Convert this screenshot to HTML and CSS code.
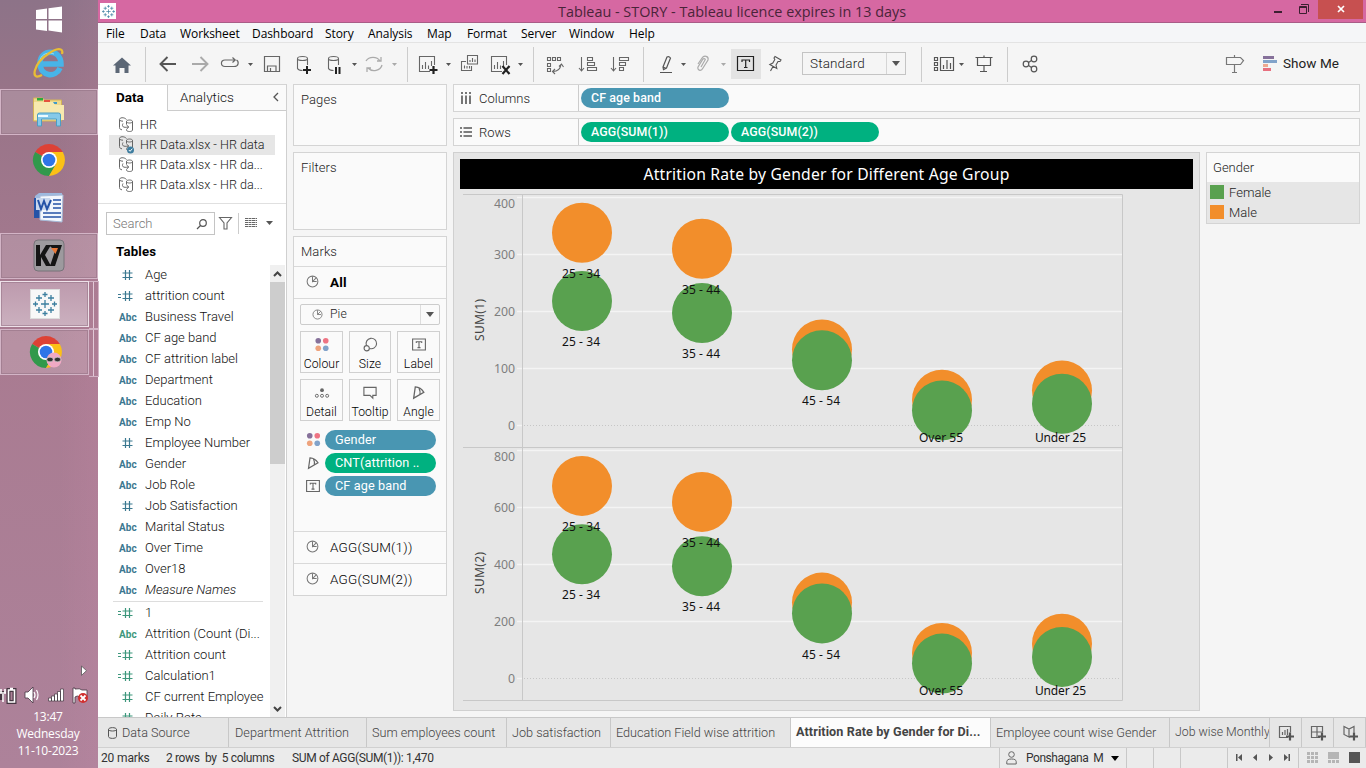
FILE: index.html
```
<!DOCTYPE html>
<html lang="en">
<head>
<meta charset="utf-8">
<title>Tableau - STORY</title>
<link rel="stylesheet" href="styles.css">
</head>
<body>
<svg class="sprites" aria-hidden="true">
  <symbol id="ds" viewBox="0 0 16 16"><g fill="none" stroke="#666"><path d="M8.500 2.500C6-.2 1.500.5 1.500 2.500v8c0 1.500 1 2 2.500 2.300M1.500 2.800c.5 1 2 1.400 3.500 1.400M8.500 4.500c0-2 6-2 6 0v8.500c0 2-6 2-6 0v-.5M8.500 4.500c0 2 6 2 6 0M8.500 4.500v3M5 6.500c-1.500 3 0 4.500 5.500 3.500M8.500 8l2.300 2-2.300 2.200"/></g></symbol>
  <symbol id="hash" viewBox="0 0 18 14"><path fill="none" stroke="currentColor" stroke-width="1.2" d="M7.500 2v10M11.500 2v10M4.500 5h10M4.500 9.500h10"/></symbol>
  <symbol id="ehash" viewBox="0 0 18 14"><path fill="none" stroke="currentColor" stroke-width="1.2" d="M7.500 2v10M11.500 2v10M4.500 5h10M4.500 9.500h10M0 5.500h3M0 8.500h3"/></symbol>
  <symbol id="pie" viewBox="0 0 14 14"><g fill="none" stroke="#777" stroke-width="1.1"><circle cx="7" cy="7" r="5.800"/><path d="M7 1.500V7l4-4M7 7h4.500"/></g></symbol>
  <symbol id="dots" viewBox="0 0 16 16"><circle cx="4" cy="4" r="3" fill="#86719a"/><circle cx="12" cy="4" r="3" fill="#ee7483"/><circle cx="4" cy="12" r="3" fill="#eea37d"/><circle cx="12" cy="12" r="3" fill="#82a3ca"/></symbol>
  <symbol id="label" viewBox="0 0 14 14"><path fill="none" stroke="#666" stroke-width="1.100" d="M.6 1.500h12.800v11H.6zM4.300 5.500V4.300h5.400v1.200M7 4.300v5.800M5.500 10.100h3"/></symbol>
  <symbol id="angle" viewBox="0 0 14 14"><path fill="none" stroke="#666" stroke-width="1.200" d="M2.500 12.300 4 1.800Q9 2 12 6.800ZM7.500 3q1.500 3 .8 6"/></symbol>
  <symbol id="chrome" viewBox="0 0 34 34"><path fill="#dd4135" d="M17 17 3.200 9a16 16 0 0 1 27.600 0Z"/><path fill="#31994b" d="M17 17 3.100 9A16 16 0 0 0 17 33l6-10Z"/><path fill="#fbc116" d="M17 9h13.800A16 16 0 0 1 17 33l7-12Z"/><circle cx="17" cy="17" r="8" fill="#fff"/><circle cx="17" cy="17" r="6.300" fill="#2f75e8"/></symbol>
  <symbol id="tableau" viewBox="0 0 24 24"><path fill="none" stroke="#3c7f9f" stroke-width="1.300" d="M12 8v8M8 12h8M6 3v6M3 6h6M18 3v6M15 6h6M6 15v6M3 18h6M18 15v6M15 18h6M12 0v5M9.500 2.500h5M12 19v5M9.500 21.500h5M2.500 9.500v5M0 12h5M21.500 9.500v5M19 12h5"/></symbol>
</svg>
<div class="desktop">
<aside class="taskbar">
  <svg class="start" width="98" height="88" viewBox="0 0 98 88">
    <path fill="#fff" d="M36 10 47 8.500V19H36zM48.500 8.300 62 6.500V19H48.500zM36 20.500h11V31l-11-1.500zM48.500 20.500H62v12l-13.500-2z"/>
    <path fill="none" stroke="#48b4e8" stroke-width="5.500" d="M40 64h21c0-16-21-15-21-1 0 14 16 15 20 5"/>
    <path fill="none" stroke="#8fdcfa" stroke-width="1" d="M40 60c2-7 9-8 14-6"/>
    <path fill="none" stroke="#e8bd35" stroke-width="2.200" d="M42 75c-13 7-8-12 6-21 8-6 16-7 14 0"/>
  </svg>
  <div class="task t-files"><svg width="34" height="34" viewBox="32 96 34 34"><path fill="#efd98a" stroke="#d4b456" d="M33.500 99h9l2 2h17v21h-28z"/><path fill="#2dab3d" d="M37 99h6v2.500h-6z"/><path fill="#e5533d" d="M44 101h6v2h-6z"/><path fill="#3f9bc9" d="M51 103h6v2h-6z"/><path fill="#f7e9ae" d="M34 103h19l2 3h9v15H34z"/><path fill="#86c9e9" stroke="#4b9ec4" d="M37.500 127v-11q0-2 2-2h19q2 0 2 2v11h-4v-7h-15v7z"/><path stroke="#e9faff" stroke-width="2" d="M38 117h10"/></svg></div>
  <div class="slot"><svg width="34" height="34"><use href="#chrome"/></svg></div>
  <div class="slot slot-word"><svg width="34" height="34" viewBox="32 190 34 34"><path fill="#9db9df" d="m35 196 4-3h23v5H35z"/><path fill="#2453a7" d="M34 198h15v20H34z"/><path fill="#f2f7fd" stroke="#a6bad8" d="m40 196 23-1-1 27-22-2z"/><path stroke="#2453a7" stroke-width="1.500" d="M53 200h8M53 204h8M53 208h8M43 213h18M43 217h18"/><path fill="#c9d8ee" d="M36 198h14v12H36z"/><path fill="none" stroke="#2453a7" stroke-width="2" d="m38 200 3 9 3-8 3 8 4-9"/></svg></div>
  <div class="task t-k7"><svg width="34" height="34"><rect x="2" y="1" width="30" height="31" rx="4" fill="#9d9a9e" stroke="#777379"/><path fill="#151515" d="M4 6h4v10l6-10h5l-6 10 6 11h-5l-5-9v9H4zM17 6h13l-7 21h-5l5-15-3-3z"/><path fill="#e8793a" d="m19 9 7 0-2.500 6z"/></svg></div>
  <div class="task t-tableau stacked active"><div class="tile"><svg width="26" height="26" viewBox="-1 -1 26 26"><use href="#tableau" width="24" height="24"/></svg></div></div>
  <div class="task t-chrome stacked"><svg width="34" height="34"><use href="#chrome"/><circle cx="25" cy="25" r="7.500" fill="#f0a9c4"/><g fill="#333" stroke="#ddd" stroke-width=".6"><ellipse cx="21" cy="24.500" rx="3.200" ry="2.300"/><ellipse cx="28.500" cy="24.500" rx="3.200" ry="2.300"/></g></svg></div>
  <svg class="tray" width="98" height="50" viewBox="0 660 98 50">
    <path fill="#fff" stroke="#555" stroke-width=".8" d="m81.500 666 5 4.700-5 4.700z"/>
    <path fill="none" stroke="#443641" stroke-width="4" d="M8.500 690h6v12h-6zM2 691v9"/>
    <path fill="none" stroke="#fff" stroke-width="1.600" d="M8.500 690h6v12h-6zM10 688.500h3M1 689v4M5 689v4M0 693h6M3 694v8"/>
    <path fill="#fff" stroke="#443641" stroke-width=".8" d="M25 692h3l5-5v16l-5-5h-3z"/>
    <path fill="none" stroke="#fff" stroke-width="1.200" d="M34 692q2 3 0 6M36.500 690q3 5 0 10"/>
    <path fill="#fff" stroke="#443641" stroke-width=".7" d="M48.500 698h3v3h-3zM51.500 696h3v5h-3zM54.500 694h3v7h-3zM57.500 691.500h3v9.500h-3zM60.500 689h3v12h-3z"/>
    <path fill="#fff" stroke="#443641" stroke-width=".8" d="M73 688h2v1q5-1 7 1h5v7h-7q-3-2-5 0v6h-2z"/>
    <circle cx="83" cy="698" r="5" fill="#d12f2f"/><path stroke="#fff" stroke-width="1.800" d="m80.500 695.500 5 5m0-5-5 5"/>
  </svg>
  <div class="clock"><span>13:47</span><span>Wednesday</span><span>11-10-2023</span></div>
</aside>

<main class="app">
  <header class="titlebar">
    <div class="app-icon"><svg width="13" height="13"><use href="#tableau"/></svg></div>
    <h1>Tableau - STORY - Tableau licence expires in 13 days</h1>
    <svg class="winbtns" width="100" height="23" viewBox="1266 0 100 23"><path stroke="#3c1f30" stroke-width="2" d="M1274 12h8"/><path fill="none" stroke="#3c1f30" d="M1299.500 6.500h7v7h-7zM1299.500 7.500h7M1301 4.500h7.500v7.500"/><path fill="#c75050" d="M1318 0h45v19h-45z"/><path stroke="#fff" stroke-width="1.700" d="m1338 6 6 6m0-6-6 6"/></svg>
  </header>
  <nav class="menu"><span class="m1">File</span><span class="m2">Data</span><span class="m3">Worksheet</span><span class="m4">Dashboard</span><span class="m5">Story</span><span class="m6">Analysis</span><span class="m7">Map</span><span class="m8">Format</span><span class="m9">Server</span><span class="m10">Window</span><span>Help</span></nav>
  <div class="toolbar">
    <svg width="48" height="41" viewBox="98 43 48 41"><path fill="#5c6776" d="m113 65.500 9-8 9 8h-2.500V73h-4v-5h-5v5h-4v-7.500z"/><path stroke="#ccc" d="M145.500 47v35"/></svg>
    <svg width="274" height="41" viewBox="146 43 274 41">
      <g fill="none" stroke="#555" stroke-width="1.900"><path d="M161 64h15M167.500 57l-7 7 7 7"/><path stroke="#aaa" d="M192 64h15M200.500 57l7 7-7 7"/></g>
      <g fill="none" stroke="#666" stroke-width="1.200"><path d="M225 60c-5 0-4.500 6.500 0 6.500h9c5 0 5-5 2.500-6.500M225 60h10M232.500 57.500l2.700 2.500-2.700 2.500"/><path d="M264.500 56.500h15v15h-15zM267.500 71v-5h8.500v5M270.500 71v-3"/></g>
      <g fill="none" stroke="#666" stroke-width="1.100"><path d="M297.500 59v9.500q1 2 5 2M307.500 59v6"/><ellipse cx="302.500" cy="58.500" rx="5" ry="2"/><path d="M328.500 59v9.500q1 2 5 2M338.500 59v6"/><ellipse cx="333.500" cy="58.500" rx="5" ry="2"/></g>
      <path stroke="#222" stroke-width="2" d="M303 70h8M307 66v8M336 67v7M339.500 67v7"/>
      <path fill="none" stroke="#aaa" stroke-width="1.300" d="M366 61a8 7 0 0 1 14 0M382 65a8 7 0 0 1-14 3M377 61h4v-4M371 68h-4v4"/>
      <path fill="#555" d="M248 63h5l-2.500 3zM352 63h5l-2.500 3z"/><path fill="#aaa" d="M392 63h5l-2.500 3z"/><path stroke="#ccc" d="M407.500 47v35"/>
    </svg>
    <svg width="234" height="41" viewBox="412 43 234 41">
      <g fill="none" stroke="#666" stroke-width="1.100"><path d="M430 71.500h-10.500v-15h15V65M422.500 69v-4M425.500 69v-7M428.500 69v-3.500M431.500 66v-5"/><path d="M467.500 55.500h10v8.500h-10zM466 61.500h-4.500v9h10V66M464.500 68.500v-3M467 68.500v-2.500M469.500 68.500V66M470 62v-2M472.500 62v-4M475 62v-2.500M502 71.500h-10.500v-15h15V65M494.500 69v-4M497.500 69v-7M500.500 69v-3.500M503.500 66v-5"/>
      <path d="M547.500 57.500h3v3h-3zM552.500 57.500h3v3h-3zM557.500 57.500h3v3h-3zM547.500 63.500h3v3h-3zM547.500 68.500h3v3h-3zM553 71.500q7 0 8-7M555 69l-2.500 2.500 2.500 2.500M559 66.500l2.500-2.500 2 3"/>
      <path d="M581.500 57v13M579 68l2.500 3 2.500-3M587.500 57.500h5v3h-5zM587.500 62.500h7v3h-7zM587.500 67.500h9v3h-9zM613.500 57v13M611 68l2.500 3 2.500-3M619.500 57.500h9v3h-9zM619.500 62.500h6v3h-6zM619.500 67.500h4v3h-4z"/></g>
      <path stroke="#222" stroke-width="2.200" d="M429.500 70h8M433.500 66v8M502.500 66l7 8m0-8-7 8"/>
      <path fill="#555" d="M446 63h5l-2.500 3zM518 63h5l-2.500 3z"/><path stroke="#ccc" d="M533.500 47v35M643.500 47v35"/>
    </svg>
    <svg width="156" height="41" viewBox="646 43 156 41">
      <path fill="#e3e3e3" d="M731 49h30v30h-30z"/>
      <path fill="none" stroke="#555" stroke-width="1.200" d="m663 67 4-10q2-1 3.500 1l-4 10-3 1.500zM660 72.500h12M663 67l3.500 1.500"/>
      <path fill="none" stroke="#aaa" stroke-width="1.200" d="m698 64 4-6c2-3 7-2 6 2l-5 8c-2 4-6 2-5-1l5-8c1-1 3 0 2 1l-4 7"/>
      <path fill="none" stroke="#222" stroke-width="1.200" d="M737.500 56.500h16v14h-16zM742 62v-2h7.500v2M745.700 60v7.500M744 67.500h3.500"/>
      <path fill="none" stroke="#555" stroke-width="1.100" d="m775 56.500 6 3.500-1 1.500h-2l-2 3.500.8 3.500-7-4 3-1.500 2-3.500-.8-1.500zM773 66.500l-2.500 4.500"/>
      <path fill="#555" d="M681 63h5l-2.500 3z"/><path fill="#aaa" d="M721 63h5l-2.500 3z"/>
    </svg>
    <div class="standard"><span>Standard</span><i class="caret"></i></div>
    <svg width="314" height="41" viewBox="906 43 314 41">
      <g fill="none" stroke="#555" stroke-width="1.200"><path d="M934.500 57.500h3v3h-3zM934.500 62.500h3v3h-3zM934.500 67.500h3v3h-3zM940.500 57.500h13v13h-13zM943.500 69v-4M947 69v-9M950.500 69v-6M975.500 57.500h17M977.500 57.500v8h13v-8M984 55.500v2M984 65.500v6M980 71.500h7"/><circle cx="1026" cy="64" r="2.800"/><circle cx="1034" cy="59" r="2.800"/><circle cx="1034" cy="69" r="2.800"/><path d="m1028.500 62.500 3-2M1028.500 65.500l3 2"/></g>
      <path fill="#555" d="M959 63h5l-2.500 3z"/><path stroke="#ccc" d="M921.500 47v35M1007.500 47v35"/>
    </svg>
    <svg width="63" height="41" viewBox="1220 43 63 41"><path fill="none" stroke="#777" stroke-width="1.200" d="M1226.500 57.500h14l3 3-3 4h-14zM1234.500 55v2.500M1234.500 64.500v8M1232 72.500h5"/><path fill="#86719a" d="M1263 56h11v3h-11z"/><path fill="#82a3ca" d="M1263 60h14v3h-14z"/><path fill="#eea990" d="M1263 64h5v3h-5z"/><path fill="#e8707f" d="M1263 68h8v3h-8z"/></svg>
    <span class="showme">Show Me</span>
  </div>

  <div class="work">
    <section class="datapane">
      <div class="tabs"><b>Data</b><div class="analytics"><span>Analytics</span><svg width="8" height="10" viewBox="0 0 8 10"><path fill="none" stroke="#555" stroke-width="1.300" d="M6 1 2 5l4 4"/></svg></div></div>
      <ul class="sources">
        <li><svg width="16" height="16"><use href="#ds"/></svg>HR</li>
        <li class="on"><svg width="17" height="17"><use href="#ds" width="16" height="16"/><circle cx="12.500" cy="14" r="3.500" fill="#3e7d9f"/><path fill="none" stroke="#fff" d="m10.800 14 1.300 1.300 2.200-2.600"/></svg>HR Data.xlsx - HR data</li>
        <li><svg width="16" height="16"><use href="#ds"/></svg>HR Data.xlsx - HR da...</li>
        <li><svg width="16" height="16"><use href="#ds"/></svg>HR Data.xlsx - HR da...</li>
      </ul>
      <div class="find">
        <div class="search"><span>Search</span><svg width="12" height="12" viewBox="0 0 12 12"><g fill="none" stroke="#555" stroke-width="1.200"><circle cx="7" cy="5" r="3.300"/><path d="M4.500 7.500 1 11"/></g></svg></div>
        <svg width="62" height="23" viewBox="215 212 62 23"><path fill="none" stroke="#666" stroke-width="1.100" d="M219.500 217.500h12l-4.500 5.500v6h-3v-6z"/><path stroke="#ccc" d="M238.500 213v21"/><path stroke="#666" stroke-dasharray="3 .5" d="M245 218.500h12M245 220.500h12M245 222.500h12M245 224.500h12M245 226.500h12"/><path fill="#555" d="M266 221h7l-3.500 4z"/></svg>
      </div>
      <h2>Tables</h2>
      <div class="fieldbox">
        <ul class="fields">
          <li><svg><use href="#hash"/></svg>Age</li>
          <li><svg><use href="#ehash"/></svg>attrition count</li>
          <li><em>Abc</em>Business Travel</li>
          <li><em>Abc</em>CF age band</li>
          <li><em>Abc</em>CF attrition label</li>
          <li><em>Abc</em>Department</li>
          <li><em>Abc</em>Education</li>
          <li><em>Abc</em>Emp No</li>
          <li><svg><use href="#hash"/></svg>Employee Number</li>
          <li><em>Abc</em>Gender</li>
          <li><em>Abc</em>Job Role</li>
          <li><svg><use href="#hash"/></svg>Job Satisfaction</li>
          <li><em>Abc</em>Marital Status</li>
          <li><em>Abc</em>Over Time</li>
          <li><em>Abc</em>Over18</li>
          <li><em>Abc</em><i>Measure Names</i></li>
          <li class="g first"><svg><use href="#ehash"/></svg>1</li>
          <li class="g"><em>Abc</em>Attrition (Count (Di...</li>
          <li class="g"><svg><use href="#ehash"/></svg>Attrition count</li>
          <li class="g"><svg><use href="#ehash"/></svg>Calculation1</li>
          <li class="g"><svg><use href="#hash"/></svg>CF current Employee</li>
          <li class="g"><svg><use href="#hash"/></svg>Daily Rate</li>
        </ul>
        <div class="scroll"><svg width="15" height="17"><path fill="none" stroke="#444" stroke-width="2" d="m4 11 3.500-3.500L11 11"/></svg><div class="thumb"></div><svg class="down" width="15" height="17"><path fill="none" stroke="#444" stroke-width="2" d="m4 7 3.500 3.500L11 7"/></svg></div>
      </div>
    </section>

    <section class="cards">
      <div class="card pages">Pages</div>
      <div class="card filters">Filters</div>
      <div class="card marks">
        <div class="mk-title">Marks</div>
        <div class="mk-row all"><svg><use href="#pie"/></svg>All</div>
        <div class="mk-body">
          <div class="mk-type"><svg><use href="#pie"/></svg><span>Pie</span><i class="caret"></i></div>
          <div class="mk-grid">
            <div><svg width="16" height="16"><use href="#dots"/></svg>Colour</div>
            <div><svg width="16" height="16" viewBox="0 0 16 16"><g fill="none" stroke="#666" stroke-width="1.200"><path d="M4.200 9a5.600 5.600 0 1 1 3.500 3.300"/><circle cx="4.500" cy="12" r="2.800"/></g></svg>Size</div>
            <div><svg width="14" height="16"><use href="#label"/></svg>Label</div>
            <div><svg width="16" height="16" viewBox="0 0 16 16"><circle cx="8" cy="5.500" r="2" fill="#666"/><g fill="none" stroke="#666"><circle cx="2.500" cy="11.500" r="1.600"/><circle cx="8" cy="11.500" r="1.600"/><circle cx="13.500" cy="11.500" r="1.600"/></g></svg>Detail</div>
            <div><svg width="16" height="16" viewBox="0 0 16 16"><path fill="none" stroke="#666" stroke-width="1.200" d="M1.500 2.500h13v8.500h-3.500v3L8 11H1.500z"/></svg>Tooltip</div>
            <div><svg width="15" height="15"><use href="#angle"/></svg>Angle</div>
          </div>
          <div class="enc"><svg width="15" height="15"><use href="#dots"/></svg><b class="pill blue">Gender</b></div>
          <div class="enc"><svg width="14" height="14"><use href="#angle"/></svg><b class="pill green">CNT(attrition ..</b></div>
          <div class="enc"><svg width="14" height="14"><use href="#label"/></svg><b class="pill blue">CF age band</b></div>
        </div>
        <div class="mk-row"><svg><use href="#pie"/></svg>AGG(SUM(1))</div>
        <div class="mk-row"><svg><use href="#pie"/></svg>AGG(SUM(2))</div>
      </div>
    </section>

    <section class="sheet">
      <div class="shelf"><div class="sh-name"><svg width="12" height="12"><path stroke="#555" stroke-width="1.600" d="M2 0v2M6 0v2M10 0v2M2 3.500V12M6 3.500V12M10 3.500V12"/></svg>Columns</div><b class="pill blue">CF age band</b></div>
      <div class="shelf"><div class="sh-name"><svg width="12" height="12"><path stroke="#555" stroke-width="1.700" d="M0 2h2M3.500 2H12M0 6h2M3.500 6H12M0 10h2M3.500 10H12"/></svg>Rows</div><b class="pill green">AGG(SUM(1))</b><b class="pill green">AGG(SUM(2))</b></div>
      <div class="viewrow">
        <div class="view">
          <div class="vtitle">Attrition Rate by Gender for Different Age Group</div>
          <svg class="chart" width="733" height="514" viewBox="460 189 733 514">
            <path stroke="#f4f4f4" stroke-width="1.300" d="M517 197.500h605M517 254.500h605M517 311.500h605M517 368.500h605M517 425.500h5M517 450.500h605M517 507.500h605M517 564.500h605M517 621.500h605M517 678.500h5"/>
            <path stroke="#c6c6c6" stroke-dasharray="1 2" d="M524 425.500h597M524 678.500h597"/>
            <path fill="none" stroke="#c8c8c8" d="M463 194.500h659.500v506H463M463 447.500h659M522.500 194.500v506"/>
            <g class="tick"><text x="515" y="208">400</text><text x="515" y="259">300</text><text x="515" y="316">200</text><text x="515" y="373">100</text><text x="515" y="430">0</text><text x="515" y="461">800</text><text x="515" y="512">600</text><text x="515" y="569">400</text><text x="515" y="626">200</text><text x="515" y="683">0</text></g>
            <text class="axis" transform="translate(483.500 341) rotate(-90)" textLength="42">SUM(1)</text>
            <text class="axis" transform="translate(483.500 594) rotate(-90)" textLength="42">SUM(2)</text>
            <g id="series"><g fill="#f28e2b"><circle cx="582" cy="232.700" r="30"/><circle cx="702" cy="248.700" r="30"/><circle cx="822" cy="349.400" r="30"/><circle cx="942" cy="399.700" r="30"/><circle cx="1062" cy="390.500" r="30"/></g>
            <g fill="#59a14f"><circle cx="582" cy="301" r="30"/><circle cx="702" cy="313" r="30"/><circle cx="822" cy="360.200" r="30"/><circle cx="942" cy="410.400" r="30"/><circle cx="1062" cy="403.700" r="30"/></g></g>
            <use href="#series" y="253.200"/>
            <g class="mark"><text x="562" y="278" textLength="38">25 - 34</text><text x="682" y="294" textLength="38">35 - 44</text><text x="562" y="346" textLength="38">25 - 34</text><text x="682" y="358" textLength="38">35 - 44</text><text x="802" y="405" textLength="38">45 - 54</text><text x="919" y="442" textLength="44">Over 55</text><text x="1035" y="442" textLength="51">Under 25</text>
            <text x="562" y="531" textLength="38">25 - 34</text><text x="682" y="547" textLength="38">35 - 44</text><text x="562" y="599" textLength="38">25 - 34</text><text x="682" y="611" textLength="38">35 - 44</text><text x="802" y="659" textLength="38">45 - 54</text><text x="919" y="695" textLength="44">Over 55</text><text x="1035" y="695" textLength="51">Under 25</text></g>
          </svg>
        </div>
        <div class="legend"><div class="lg-title">Gender</div><div class="lg-body"><p><i class="female"></i>Female</p><p><i class="male"></i>Male</p></div></div>
      </div>
    </section>
  </div>

  <div class="sheets">
    <div class="s1"><svg width="9" height="12"><path fill="none" stroke="#555" d="M.5 2.500v7c0 2.500 8 2.500 8 0v-7c0-2.500-8-2.500-8 0 0 2 8 2 8 0"/></svg>Data Source</div>
    <div class="s2">Department Attrition</div><div class="s3">Sum employees count</div><div class="s4">Job satisfaction</div><div class="s5">Education Field wise attrition</div><div class="s6">Attrition Rate by Gender for Di...</div><div class="s7">Employee count wise Gender</div><div class="s8">Job wise Monthly</div>
    <svg class="newtabs" width="97" height="29" viewBox="1269 718 97 29"><path stroke="#c8c8c8" d="M1269.500 718v29M1301.500 718v29M1333.500 718v29M1365.500 718v29"/><g fill="none" stroke="#666" stroke-width="1.200"><path d="M1288 737.500h-8.500v-11h11v6M1282.500 735v-3M1285 735v-5M1287.500 735v-6M1320 737.500h-8.500v-11h11v6M1311.500 732h11M1317 726.500v11M1350 737.500l-6-3v-8l5 2.500 5-2.500v6M1349 729v8"/></g><path stroke="#555" stroke-width="2.200" d="M1286 736.500h8M1290 732.500v8M1318 736.500h8M1322 732.500v8M1350 736.500h8M1354 732.500v8"/></svg>
  </div>
  <footer class="status"><span class="f1">20 marks</span><span class="f2">2 rows&nbsp; by&nbsp; 5 columns</span><span class="f3">SUM of AGG(SUM(1)): 1,470</span>
    <div class="user"><svg width="11" height="14"><g fill="none" stroke="#666"><circle cx="5.500" cy="3.500" r="2.800"/><path d="M.8 13v-2.500Q1 8 5.500 8T10.200 10.500V13z"/></g></svg><span>Ponshagana&nbsp; M</span><svg width="8" height="5"><path d="M0 0h8L4 5z"/></svg></div>
    <svg width="240" height="20" viewBox="1126 748 240 20"><path stroke="#c8c8c8" d="M1126.500 748v20M1153.500 748v20M1180.500 748v20M1227.500 748v20M1298.500 748v20"/><path fill="#555" d="M1236 754h1.500v7h-1.500zM1242 754v7l-4-3.500zM1257 754v7l-4-3.500zM1269 754v7l4-3.500zM1284 754v7l4-3.500zM1288.500 754h1.500v7h-1.500zM1349 752h11v11h-11z"/><path stroke="#b5b5b5" stroke-width="3" stroke-dasharray="3 1" d="M1307 753.500h11M1307 757.500h11M1307 761.500h11M1328 761.500h11"/><path fill="#b5b5b5" d="M1328 752h11v7h-11z"/></svg>
  </footer>
</main>
</div>
</body>
</html>
```
FILE: styles.css
```
* { box-sizing: border-box; }
body { margin: 0; width: 1366px; height: 768px; overflow: hidden; font: 300 13px "Roboto", sans-serif; color: #111; }
ul, h1, h2, p { margin: 0; padding: 0; list-style: none; }
svg { display: block; flex: none; }
.sprites { display: none; }
.desktop { display: flex; height: 768px; }

.taskbar { width: 98px; flex: none; display: flex; flex-direction: column; background: linear-gradient(90deg, #0000 60%, #ff9bc714), linear-gradient(#8d7388, #987488 12%, #a97b91 45%, #ad829a); }
.task { height: 46px; flex: none; display: flex; align-items: center; padding-left: 31px; border: 1px solid #d3b4c6; box-shadow: inset 0 0 0 1px #92708388; background: #ffffff2b; }
.t-files { margin-top: 1px; }
.slot { height: 48px; flex: none; padding: 8px 0 0 32px; }
.slot-word { height: 50px; padding-top: 7px; }
.stacked { width: 89px; position: relative; padding-left: 28px; margin-top: 2px; }
.stacked::after { content: ""; position: absolute; left: 88px; top: -1px; width: 9px; height: 46px; border: 1px solid #d3b4c6; border-left: 0; background: linear-gradient(90deg, #0000 4px, #e2c9d7 4px, #e2c9d7 5px, #0000 5px); }
.active { border-color: #eee1e9; background: linear-gradient(#bd9aad, #cbb0bf); }
.tile { width: 30px; height: 30px; background: #f8f8f8; border: 1px solid #ddd; display: grid; place-items: center; margin-left: 1px; }
.tray { margin-top: auto; }
.clock { height: 58px; display: flex; flex-direction: column; align-items: center; font: 12px/17px "Open Sans", sans-serif; color: #fff; padding: 0 2px 0 0; margin-top: -2px; margin-bottom: 2px; letter-spacing: -.2px; }

.app { flex: 1; min-width: 0; display: flex; flex-direction: column; background: #f5f5f5; }
.titlebar { height: 23px; display: flex; background: #d668a2; border-bottom: 1px solid #a95c87; }
.app-icon { width: 16px; height: 16px; margin: 3px 0 0 2px; background: #fff; display: grid; place-items: center; }
.titlebar h1 { flex: 1; text-align: center; font: 14.400px/23px "Open Sans", sans-serif; color: #4a2439; padding-left: 82px; }
.winbtns { flex: none; }
.menu { height: 20px; background: #f5f6f8; border-bottom: 1px solid #e3e3e3; padding-left: 8px; display: flex; font: 12px/21px "Open Sans", sans-serif; letter-spacing: -.08px; color: #000; white-space: nowrap; }
.m1 { width: 34px; } .m2 { width: 40px; } .m3 { width: 72px; } .m4 { width: 73px; } .m5 { width: 43px; } .m6 { width: 59px; } .m7 { width: 40px; } .m8 { width: 54px; } .m9 { width: 48px; } .m10 { width: 60px; }
.toolbar { height: 41px; display: flex; align-items: center; }
.toolbar > svg:nth-child(3) { margin-left: -8px; }
.caret { border: 4px solid transparent; border-top: 5px solid #555; border-bottom: 0; margin: auto 5px; }
.standard { width: 104px; height: 23px; border: 1px solid #c4c4c4; display: flex; line-height: 21px; font-size: 13.500px; color: #222; letter-spacing: .15px; }
.standard span { flex: 1; padding-left: 7px; border-right: 1px solid #d5d5d5; }
.showme { font-size: 13.500px; letter-spacing: .05px; font-weight: 400; line-height: 16px; margin-bottom: 2px; color: #222; }

.work { height: 633px; display: flex; }
.datapane { width: 189px; flex: none; background: #fff; border-right: 1px solid #d0d0d0; border-top: 1px solid #d4d4d4; display: flex; flex-direction: column; }
.tabs { height: 26px; flex: none; display: flex; align-items: center; }
.tabs b { width: 69px; padding: 0 0 2px 18px; font-weight: 700; font-size: 13.500px; color: #000; }
.analytics { flex: 1; height: 26px; border-left: 1px solid #ccc; border-bottom: 1px solid #ccc; background: #fafafa; display: flex; justify-content: space-between; align-items: center; padding: 0 6px 1px 12px; font-size: 13.500px; }
.sources { height: 93px; flex: none; border-bottom: 1px solid #e0e0e0; padding: 4px 11px; color: #222; font-size: 12.600px; }
.sources li { height: 20px; display: flex; align-items: center; padding: 0 0 1px 9px; gap: 6px; white-space: nowrap; }
.sources li svg { width: 16px; overflow: visible; }
.on { background: #e6e6e6; }
.find { display: flex; padding: 8px 0 0 8px; height: 31px; flex: none; }
.search { width: 109px; height: 23px; border: 1px solid #c4c4c4; display: flex; align-items: center; justify-content: space-between; padding: 0 6px; color: #777; }
h2 { height: 30px; flex: none; padding-left: 18px; font: bold 13.200px/33px "Roboto", sans-serif; letter-spacing: .2px; color: #000; }
.fieldbox { flex: 1; min-height: 0; display: flex; overflow: hidden; }
.fields { width: 172px; flex: none; padding-left: 21px; font-size: 13px; margin-top: -1px; }
.fields li { height: 21px; line-height: 20px; display: flex; align-items: center; white-space: nowrap; }
.fields svg, .fields em { width: 26px; height: 14px; color: #3b7890; }
.fields svg { width: 18px; margin-right: 9px; margin-left: -1px; }
.fields em { font: bold 10px/15px "Roboto", sans-serif; letter-spacing: .1px; }
.fields .g em, .fields .g svg { color: #3d977c; }
.fields .first { border-top: 1px solid #ddd; margin: 1px 7px 0 -6px; padding-left: 6px; height: 22px; }
.scroll { width: 15px; background: #f0f0f0; display: flex; flex-direction: column; }
.thumb { height: 182px; background: #cdcdcd; }
.down { margin-top: auto; }

.cards { width: 154px; margin-left: 6px; flex: none; }
.card { border: 1px solid #d4d4d4; background: #fafafa; margin-bottom: 6px; padding: 7px; color: #222; letter-spacing: .1px; }
.pages { height: 62px; } .filters { height: 78px; }
.marks { height: 360px; padding: 0; display: flex; flex-direction: column; }
.mk-title { height: 29px; padding: 7px; flex: none; }
.mk-row { height: 32px; border-top: 1px solid #d9d9d9; display: flex; align-items: center; gap: 12px; padding: 0 0 2px 12px; color: #000; font-size: 13.500px; letter-spacing: .2px; flex: none; }
.mk-row svg, .mk-type svg { width: 13px; height: 13px; }
.mk-row svg { margin-right: -1px; }
.all { font-weight: bold; color: #000; }
.mk-body { flex: 1; border-top: 1px solid #d9d9d9; padding: 5px 6px; font-size: 12.200px; }
.mk-type { height: 21px; border: 1px solid #ccc; border-radius: 2px; display: flex; align-items: center; padding-left: 11px; gap: 7px; }
.mk-type svg { width: 11px; height: 11px; }
.mk-type span { flex: 1; border-right: 1px solid #ddd; line-height: 19px; }
.mk-type .caret { margin-left: -2px; }
.mk-grid { display: grid; grid-template-columns: 43px 42px 43px; gap: 6px; margin: 6px 0 7px; width: 140px; }
.mk-grid div { height: 42px; border: 1px solid #d0d0d0; display: flex; flex-direction: column; align-items: center; padding-top: 5px; gap: 5px; line-height: 14px; color: #000; }
.mk-grid div svg { height: 15px; }
.enc { height: 23px; display: flex; align-items: center; padding-left: 6px; }
.enc svg { margin-right: auto; }
.enc .pill { width: 111px; margin-right: 4px; }
.pill { height: 20px; border-radius: 10px; color: #fff; font-weight: 400; font-size: 12.700px; line-height: 20px; padding-left: 10px; letter-spacing: .1px; }
.blue { background: #4996b2; } .green { background: #00b180; }

.sheet { width: 907px; margin-left: 6px; }
.shelf { height: 28px; margin-bottom: 6px; border: 1px solid #d4d4d4; background: #fafafa; display: flex; align-items: center; gap: 2px; }
.sh-name { width: 125px; height: 26px; border-right: 1px solid #ccc; display: flex; align-items: center; gap: 7px; padding-left: 6px; color: #222; }
.shelf .pill { width: 148px; font-weight: 500; font-size: 12.400px; }
.viewrow { display: flex; gap: 6px; align-items: flex-start; }
.view { width: 747px; height: 559px; background: #e6e6e6; border: 1px solid #d0d0d0; padding: 6px; }
.vtitle { height: 30px; background: #000; color: #fff; text-align: center; font: 15.700px/31px "Noto Sans", sans-serif; letter-spacing: .2px; }
.chart text { font-family: "Noto Sans", sans-serif; font-weight: 400; }
.tick text { font-size: 12.300px; fill: #7e7e7e; text-anchor: end; }
.axis { font-size: 12px; fill: #444; }
.mark text { font-size: 12px; fill: #111; }
.legend { width: 154px; height: 72px; border: 1px solid #d4d4d4; background: #fafafa; color: #222; }
.lg-title { height: 29px; padding: 7px 6px; }
.lg-body { background: #e6e6e6; height: 41px; }
.lg-body p { height: 20px; display: flex; align-items: center; padding-left: 3px; gap: 5px; }
.lg-body i { width: 14px; height: 14px; }
.female { background: #59a14f; } .male { background: #f28e2b; }

.sheets { height: 30px; background: #e6e6e6; border-top: 1px solid #c8c8c8; display: flex; color: #444; line-height: 29px; white-space: nowrap; font-size: 12.650px; }
.sheets > div { border-right: 1px solid #c8c8c8; padding-left: 5px; overflow: hidden; flex: none; }
.sheets .s1 { width: 131px; display: flex; align-items: center; gap: 5px; padding-left: 10px; }
.sheets .s2 { width: 138px; padding-left: 6px; letter-spacing: .05px; }
.s3 { width: 140px; } .s4 { width: 104px; } .s5 { width: 180px; }
.s6 { width: 200px; background: #fcfcfc; font-weight: bold; font-size: 12.600px; letter-spacing: .1px; line-height: 28px; color: #444; }
.s7 { width: 179px; }
.sheets .s8 { width: 99px; border-right: 0; font-size: 12.300px; }
.status { height: 21px; background: #ebebeb; border-top: 1px solid #d0d0d0; display: flex; font-size: 12px; font-weight: 400; letter-spacing: -.15px; line-height: 20px; padding-left: 3px; white-space: nowrap; color: #333; }
.f1 { width: 65px; } .f2 { width: 126px; letter-spacing: -.35px; } .f3 { flex: 1; letter-spacing: -.35px; }
.user { width: 127px; border-left: 1px solid #c8c8c8; display: flex; align-items: center; padding-left: 6px; }
.user span { width: 85px; margin-left: 9px; letter-spacing: -.45px; }
```
